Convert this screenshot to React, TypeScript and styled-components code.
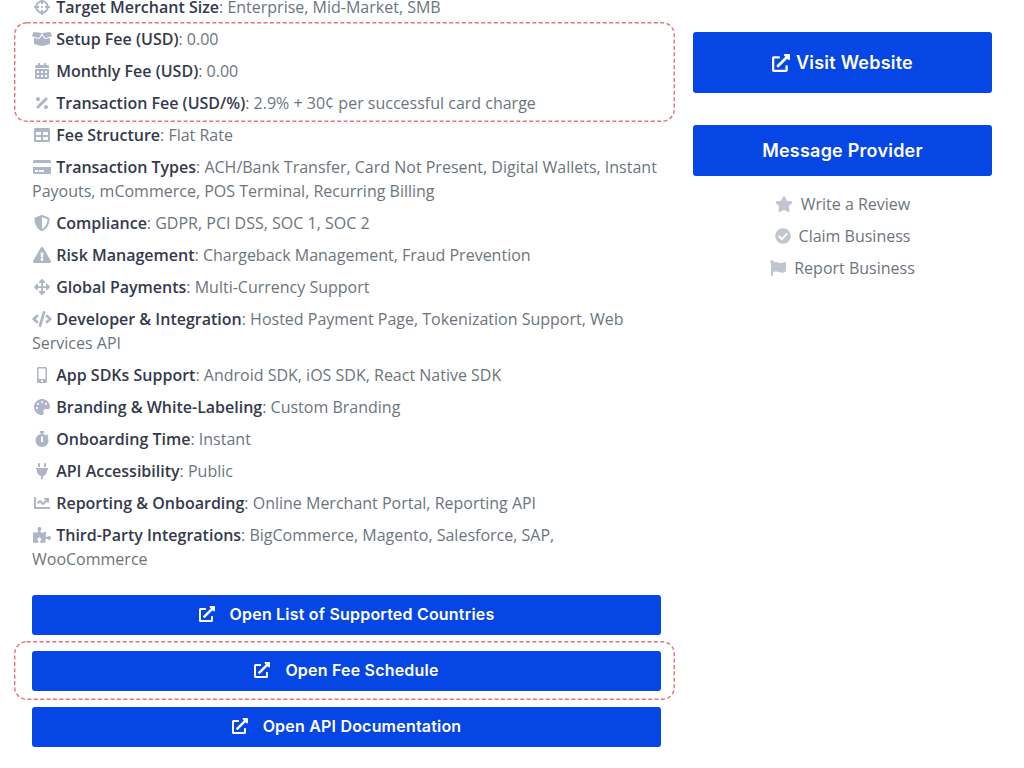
import React from 'react';
import styled, { createGlobalStyle } from 'styled-components';
import {
  FaArrowsAlt,
  FaBoxOpen,
  FaCalendarAlt,
  FaChartLine,
  FaCheckCircle,
  FaCode,
  FaCreditCard,
  FaCrosshairs,
  FaExclamationTriangle,
  FaExternalLinkAlt,
  FaFlag,
  FaMobileAlt,
  FaPalette,
  FaPercentage,
  FaPlug,
  FaPuzzlePiece,
  FaShieldAlt,
  FaStar,
  FaStopwatch,
  FaTable,
} from 'react-icons/fa';

const GlobalStyle = createGlobalStyle`
  html, body {
    margin: 0;
    background: #fff;
  }
  body {
    font-family: "Open Sans", "Liberation Sans", sans-serif;
    font-size: 16px;
    line-height: 24px;
    color: #6c757d;
    height: 768px;
    overflow: hidden;
  }
`;

const Page = styled.div`
  display: grid;
  grid-template-columns: 629px 299px;
  gap: 32px;
  padding: 0 32px;
  margin-top: -5px;
`;

const Details = styled.div`
  display: flex;
  flex-direction: column;
`;

const Row = styled.div`
  margin-bottom: 8px;
`;

const Label = styled.strong`
  font-weight: 600;
  color: #343a4b;
`;

const RowIcon = styled.span<{ $width: number }>`
  display: inline-block;
  width: 20px;
  margin-right: 4.2px;
  text-align: center;
  color: #adb5c6;
  line-height: 1;
  vertical-align: 0;

  svg {
    display: inline-block;
    height: 16px;
    width: ${(p) => p.$width}px;
    vertical-align: top;
  }
`;

const HighlightGroup = styled.div`
  position: relative;
`;

const Highlight = styled.svg<{ $top: number; $bottom: number }>`
  position: absolute;
  top: ${(p) => p.$top}px;
  bottom: ${(p) => p.$bottom}px;
  left: -18px;
  width: calc(100% + 32px);
  height: calc(100% - ${(p) => p.$top + p.$bottom}px);
  overflow: visible;
  pointer-events: none;

  rect {
    x: 0.7px;
    y: 0.7px;
    width: calc(100% - 1.4px);
    height: calc(100% - 1.4px);
    rx: 12px;
    fill: none;
    stroke: #e4727c;
    stroke-width: 1.4px;
    stroke-dasharray: 4 2.4;
  }
`;

const ButtonStack = styled.div`
  display: flex;
  flex-direction: column;
  gap: 16px;
  margin-top: 16px;
`;

const PrimaryButton = styled.a<{ $height: number; $size: number; $gap: number; $shift: number }>`
  display: flex;
  align-items: center;
  justify-content: center;
  gap: ${(p) => p.$gap}px;
  box-sizing: border-box;
  height: ${(p) => p.$height}px;
  padding: ${(p) => Math.max(p.$shift, 0)}px 0 ${(p) => Math.max(-p.$shift, 0)}px;
  background: #0546e4;
  border-radius: 3px;
  color: #fff;
  font-family: "Inter", "Liberation Sans", sans-serif;
  font-weight: 600;
  font-size: ${(p) => p.$size}px;
  letter-spacing: 0.0125em;
  white-space: nowrap;

  svg {
    height: 1em;
    width: 1em;
  }
`;

const Sidebar = styled.aside`
  display: flex;
  flex-direction: column;
  padding-top: 37px;
`;

const SidebarButtons = styled.div`
  display: flex;
  flex-direction: column;
  gap: 32px;
  margin-bottom: 16px;
`;

const SideLink = styled.div`
  display: flex;
  align-items: center;
  justify-content: center;
  gap: 8px;
  height: 24px;
  margin-bottom: 8px;
  color: #6c757d;
`;

const SideIcon = styled.span<{ $width: number }>`
  display: flex;
  color: #c0c5d0;

  svg {
    height: 16px;
    width: ${(p) => p.$width}px;
  }
`;

type Detail = {
  icon: React.ReactNode;
  iconWidth: number;
  label: string;
  value: string;
};

const topRow: Detail = {
  icon: <FaCrosshairs />,
  iconWidth: 16,
  label: 'Target Merchant Size',
  value: 'Enterprise, Mid-Market, SMB',
};

const feeRows: Detail[] = [
  { icon: <FaBoxOpen />, iconWidth: 20, label: 'Setup Fee (USD)', value: '0.00' },
  { icon: <FaCalendarAlt />, iconWidth: 14, label: 'Monthly Fee (USD)', value: '0.00' },
  {
    icon: <FaPercentage />,
    iconWidth: 12,
    label: 'Transaction Fee (USD/%)',
    value: '2.9% + 30¢ per successful card charge',
  },
];

const otherRows: Detail[] = [
  { icon: <FaTable />, iconWidth: 16, label: 'Fee Structure', value: 'Flat Rate' },
  {
    icon: <FaCreditCard />,
    iconWidth: 18,
    label: 'Transaction Types',
    value: 'ACH/Bank Transfer, Card Not Present, Digital Wallets, Instant Payouts, mCommerce, POS Terminal, Recurring Billing',
  },
  { icon: <FaShieldAlt />, iconWidth: 16, label: 'Compliance', value: 'GDPR, PCI DSS, SOC 1, SOC 2' },
  {
    icon: <FaExclamationTriangle />,
    iconWidth: 18,
    label: 'Risk Management',
    value: 'Chargeback Management, Fraud Prevention',
  },
  { icon: <FaArrowsAlt />, iconWidth: 16, label: 'Global Payments', value: 'Multi-Currency Support' },
  {
    icon: <FaCode />,
    iconWidth: 20,
    label: 'Developer & Integration',
    value: 'Hosted Payment Page, Tokenization Support, Web Services API',
  },
  { icon: <FaMobileAlt />, iconWidth: 10, label: 'App SDKs Support', value: 'Android SDK, iOS SDK, React Native SDK' },
  { icon: <FaPalette />, iconWidth: 16, label: 'Branding & White-Labeling', value: 'Custom Branding' },
  { icon: <FaStopwatch />, iconWidth: 14, label: 'Onboarding Time', value: 'Instant' },
  { icon: <FaPlug />, iconWidth: 12, label: 'API Accessibility', value: 'Public' },
  {
    icon: <FaChartLine />,
    iconWidth: 16,
    label: 'Reporting & Onboarding',
    value: 'Online Merchant Portal, Reporting API',
  },
  {
    icon: <FaPuzzlePiece />,
    iconWidth: 18,
    label: 'Third-Party Integrations',
    value: 'BigCommerce, Magento, Salesforce, SAP, WooCommerce',
  },
];

const DetailRow: React.FC<{ row: Detail }> = ({ row }) => (
  <Row>
    <RowIcon $width={row.iconWidth}>{row.icon}</RowIcon>
    <Label>{row.label}</Label>: {row.value}
  </Row>
);

const App: React.FC = () => {
  return (
    <>
      <GlobalStyle />
      <Page>
        <Details>
          <DetailRow row={topRow} />
          <HighlightGroup>
            {feeRows.map((row) => (
              <DetailRow key={row.label} row={row} />
            ))}
            <Highlight $top={-5} $bottom={1}>
              <rect />
            </Highlight>
          </HighlightGroup>
          {otherRows.map((row) => (
            <DetailRow key={row.label} row={row} />
          ))}
          <ButtonStack>
            <PrimaryButton $height={40} $size={16} $gap={15} $shift={-2}>
              <FaExternalLinkAlt /> Open List of Supported Countries
            </PrimaryButton>
            <HighlightGroup>
              <PrimaryButton $height={40} $size={16} $gap={15} $shift={-2}>
                <FaExternalLinkAlt /> Open Fee Schedule
              </PrimaryButton>
              <Highlight $top={-10} $bottom={-9}>
                <rect />
              </Highlight>
            </HighlightGroup>
            <PrimaryButton $height={40} $size={16} $gap={15} $shift={-2}>
              <FaExternalLinkAlt /> Open API Documentation
            </PrimaryButton>
          </ButtonStack>
        </Details>
        <Sidebar>
          <SidebarButtons>
            <PrimaryButton $height={61} $size={18} $gap={6} $shift={1}>
              <FaExternalLinkAlt /> Visit Website
            </PrimaryButton>
            <PrimaryButton $height={51} $size={18} $gap={6} $shift={1}>
              Message Provider
            </PrimaryButton>
          </SidebarButtons>
          <SideLink>
            <SideIcon $width={18}>
              <FaStar />
            </SideIcon>
            Write a Review
          </SideLink>
          <SideLink>
            <SideIcon $width={16}>
              <FaCheckCircle />
            </SideIcon>
            Claim Business
          </SideLink>
          <SideLink>
            <SideIcon $width={16}>
              <FaFlag />
            </SideIcon>
            Report Business
          </SideLink>
        </Sidebar>
      </Page>
    </>
  );
};

export default App;
